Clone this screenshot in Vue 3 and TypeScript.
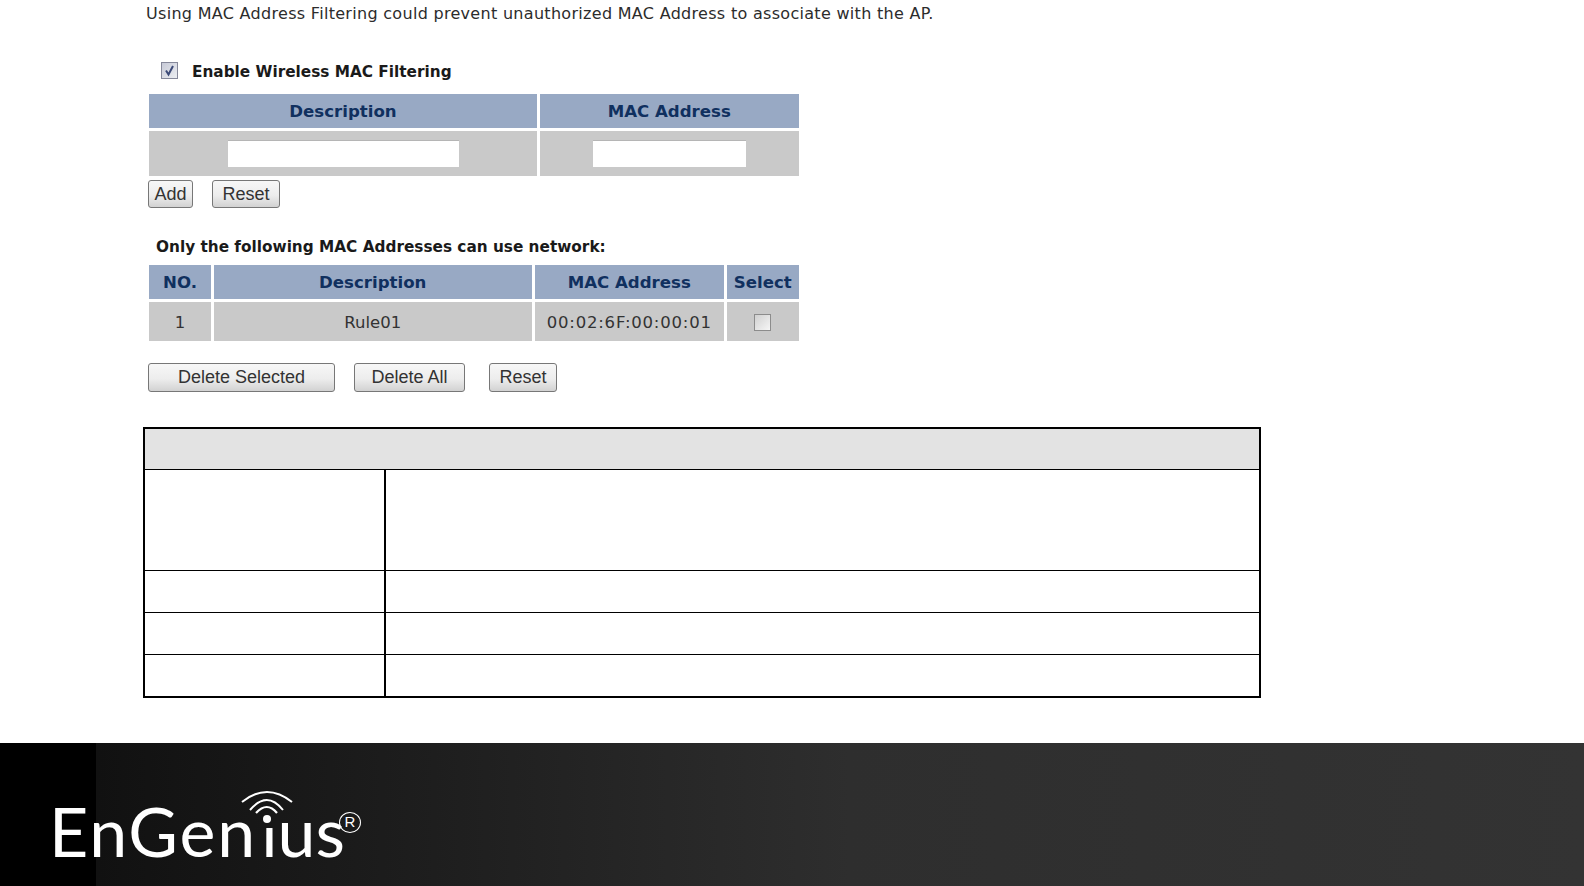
<script setup lang="ts">
const head1 = [
  { label: 'Description', width: 388 },
  { label: 'MAC Address', width: 259.5 },
]
const head2 = [
  { label: 'NO.', width: 62 },
  { label: 'Description', width: 318.5 },
  { label: 'MAC Address', width: 189.5 },
  { label: 'Select', width: 72.5 },
]
const rowHeights = [101, 42, 42, 42]
</script>

<template>
  <div class="page">
    <main class="content">
      <p class="intro">Using MAC Address Filtering could prevent unauthorized MAC Address to associate with the AP.</p>

      <label class="enable">
        <span class="check on">
          <svg width="13" height="13" viewBox="0 0 13 13"><path d="M3 6.500 L5.500 10.500 L10 2" fill="none" stroke="#3c4a78" stroke-width="2" /></svg>
        </span>
        <b>Enable Wireless MAC Filtering</b>
      </label>

      <div class="grid">
        <div v-for="h in head1" :key="h.label" class="th" :style="{ width: h.width + 'px' }">{{ h.label }}</div>
      </div>
      <div class="grid">
        <div class="td tall" :style="{ width: head1[0].width + 'px' }"><span class="field wide"></span></div>
        <div class="td tall" :style="{ width: head1[1].width + 'px' }"><span class="field narrow"></span></div>
      </div>

      <div class="buttons first">
        <button class="btn add">Add</button>
        <button class="btn reset1">Reset</button>
      </div>

      <p class="only"><b>Only the following MAC Addresses can use network:</b></p>

      <div class="grid">
        <div v-for="h in head2" :key="h.label" class="th" :style="{ width: h.width + 'px' }">{{ h.label }}</div>
      </div>
      <div class="grid">
        <div class="td" :style="{ width: head2[0].width + 'px' }">1</div>
        <div class="td" :style="{ width: head2[1].width + 'px' }">Rule01</div>
        <div class="td mac" :style="{ width: head2[2].width + 'px' }">00:02:6F:00:00:01</div>
        <div class="td" :style="{ width: head2[3].width + 'px' }"><span class="check off"></span></div>
      </div>

      <div class="buttons second">
        <button class="btn del-sel">Delete Selected</button>
        <button class="btn del-all">Delete All</button>
        <button class="btn reset2">Reset</button>
      </div>

      <div class="blank-table">
        <div class="blank-head"></div>
        <div v-for="(h, i) in rowHeights" :key="i" class="blank-row" :style="{ height: h + 'px' }">
          <div class="blank-left"></div>
          <div class="blank-right"></div>
        </div>
      </div>
    </main>

    <footer class="footer">
      <div class="logo">
        <span class="wordmark">EnGen<span class="stem">i</span><span class="tail">us</span></span>
        <svg class="wifi" width="56" height="36" viewBox="0 0 56 36" fill="none" stroke="#fff">
          <path d="M3 12 Q28 -8 53 12" stroke-width="2" />
          <path d="M11 20 Q28 0 44 20" stroke-width="2" />
          <path d="M17 23 Q28 11 38 23" stroke-width="2.200" />
          <circle cx="28" cy="29" r="4" fill="#fff" stroke="none" />
        </svg>
        <span class="mark">R</span>
      </div>
    </footer>
  </div>
</template>

<style>
html, body { margin: 0; background: #fff; }
</style>

<style scoped>
.page {
  width: 1584px;
  height: 886px;
  display: flex;
  flex-direction: column;
  overflow: hidden;
  font-family: "DejaVu Sans", sans-serif;
  background: #fff;
}
.content {
  flex: 1;
  padding-left: 149px;
  box-sizing: border-box;
}
.intro {
  margin: 5px 0 0 -3px;
  font-size: 16px;
  letter-spacing: 0.3px;
  line-height: 18px;
  color: #2c2c2c;
}
.enable {
  display: flex;
  align-items: center;
  gap: 14px;
  margin: 39px 0 0 12px;
  height: 20px;
  font-size: 15.300px;
  color: #1a1a1a;
}
.enable .check {
  margin-bottom: 3px;
}
.check {
  box-sizing: border-box;
  display: inline-flex;
  align-items: center;
  justify-content: center;
  width: 17px;
  height: 17px;
  border: 1px solid #85889a;
  background: linear-gradient(135deg, #c6c9d6, #eceef2);
}
.check.off {
  border-color: #8c8c8c;
  background: linear-gradient(135deg, #d0d0d0, #f6f6f6);
}
.grid {
  display: flex;
  gap: 2.500px;
  margin-top: 3px;
}
.enable + .grid { margin-top: 12px; }
.only + .grid { margin-top: 8px; }
.th {
  box-sizing: border-box;
  height: 34px;
  padding-top: 1px;
  background: #98a9c4;
  color: #10305f;
  font-weight: 700;
  font-size: 16.600px;
  display: flex;
  align-items: center;
  justify-content: center;
}
.td {
  box-sizing: border-box;
  height: 39px;
  padding-top: 1px;
  background: #c9c9c9;
  color: #333;
  font-size: 16.500px;
  display: flex;
  align-items: center;
  justify-content: center;
}
.td.tall {
  height: 45px;
  padding-top: 0;
}
.td.mac {
  letter-spacing: 0.8px;
}
.field {
  display: block;
  height: 27px;
  background: #fff;
  border-top: 1px solid #b5b5b5;
  box-sizing: border-box;
}
.field.wide { width: 231px; }
.field.narrow { width: 153px; }
.buttons {
  display: flex;
  margin-left: -1px;
  gap: 19px;
}
.buttons.first { margin-top: 4px; }
.buttons.second { margin-top: 22px; }
.btn {
  height: 29px;
  padding: 0;
  box-sizing: border-box;
  border: 1px solid #777;
  border-radius: 3px;
  background: linear-gradient(#f7f7f7, #ededed 55%, #d2d2d2);
  font-family: "Liberation Sans", sans-serif;
  font-size: 18px;
  color: #333;
}
.first .btn { height: 28px; }
.add { width: 45px; }
.reset1 { width: 68px; }
.del-sel { width: 187px; }
.del-all { width: 111px; }
.reset2 { width: 68px; margin-left: 5px; }
.only {
  margin: 29px 0 0 7px;
  font-size: 15.300px;
  line-height: 20px;
  color: #1a1a1a;
}
.blank-table {
  box-sizing: border-box;
  width: 1118px;
  margin: 35px 0 0 -6px;
  border: 2px solid #000;
}
.blank-head {
  height: 40px;
  background: #e3e3e3;
}
.blank-row {
  display: flex;
  box-sizing: border-box;
  border-top: 1px solid #000;
}
.blank-left {
  width: 239px;
  flex: none;
  border-right: 2px solid #000;
}
.blank-right { flex: 1; }
.footer {
  height: 143px;
  flex: none;
  background: linear-gradient(90deg, #000 0, #000 96px, #111 96px, #2e2e2e 850px, #333 100%);
  position: relative;
}
.logo {
  position: absolute;
  left: 52px;
  top: 0;
  width: 340px;
  height: 143px;
  color: #fff;
}
.wordmark {
  position: absolute;
  left: -3px;
  top: 47px;
  font-family: "Lato", sans-serif;
  font-weight: 400;
  font-size: 68px;
  letter-spacing: 1.900px;
  line-height: 82px;
  white-space: nowrap;
}
.stem {
  display: inline-block;
  margin-left: 4px;
  letter-spacing: 0;
  clip-path: inset(38px 0 0 0);
}
.tail {
  letter-spacing: 0;
}
.wifi {
  position: absolute;
  left: 187px;
  top: 47px;
}
.mark {
  position: absolute;
  left: 287px;
  top: 69px;
  box-sizing: border-box;
  width: 22px;
  height: 21px;
  border: 1.200px solid #fff;
  border-radius: 50%;
  font-family: "Liberation Sans", sans-serif;
  font-size: 15px;
  line-height: 18px;
  text-align: center;
}
</style>
